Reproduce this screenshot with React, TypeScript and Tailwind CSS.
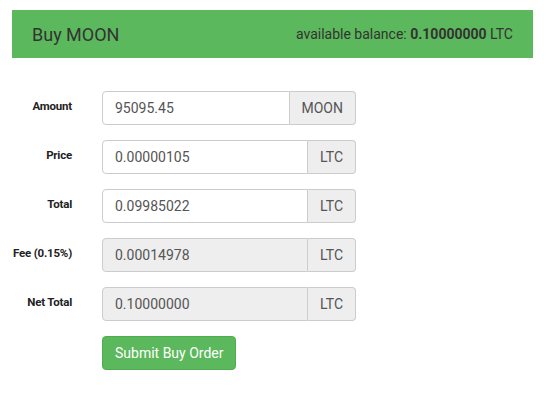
import React from "react";

const rows = [
  { label: "Amount", value: "95095.45", unit: "MOON", ro: false },
  { label: "Price", value: "0.00000105", unit: "LTC", ro: false },
  { label: "Total", value: "0.09985022", unit: "LTC", ro: false },
  { label: "Fee (0.15%)", value: "0.00014978", unit: "LTC", ro: true },
  { label: "Net Total", value: "0.10000000", unit: "LTC", ro: true },
];

export default function App() {
  return (
    <div className="w-[548px] h-[393px] bg-white pt-[10px] px-[12px]" style={{ fontFamily: "Roboto, 'Liberation Sans', sans-serif" }}>
      <div className="w-[521px] h-[48px] bg-[#5cb85c] flex items-center justify-between px-[20px] text-[#333]">
        <span className="text-[18px]">Buy MOON</span>
        <span className="text-[14px]">
          available balance: <b className="font-bold">0.10000000</b> LTC
        </span>
      </div>
      <div className="mt-[33px] flex flex-col gap-[15px]">
        {rows.map((r) => (
          <div key={r.label} className="flex items-center">
            <div className="w-[60px] text-right text-[11.5px] font-bold text-[#222] tracking-[-0.2px] pt-[1px] pb-[3px] whitespace-nowrap">{r.label}</div>
            <div className="ml-[30px] flex w-[254px] h-[34px]">
              <div className={`flex-1 flex items-center px-[12px] border border-[#ccc] rounded-l-[4px] text-[14px] text-[#555] ${r.ro ? "bg-[#eee]" : "bg-white"}`}>
                {r.value}
              </div>
              <div className="flex items-center px-[12px] border border-l-0 border-[#ccc] rounded-r-[4px] bg-[#eee] text-[14px] text-[#555]">
                {r.unit}
              </div>
            </div>
          </div>
        ))}
        <div className="ml-[90px]">
          <button className="h-[34px] px-[12px] bg-[#5cb85c] border border-[#4cae4c] rounded-[4px] text-white text-[14px]">
            Submit Buy Order
          </button>
        </div>
      </div>
    </div>
  );
}
